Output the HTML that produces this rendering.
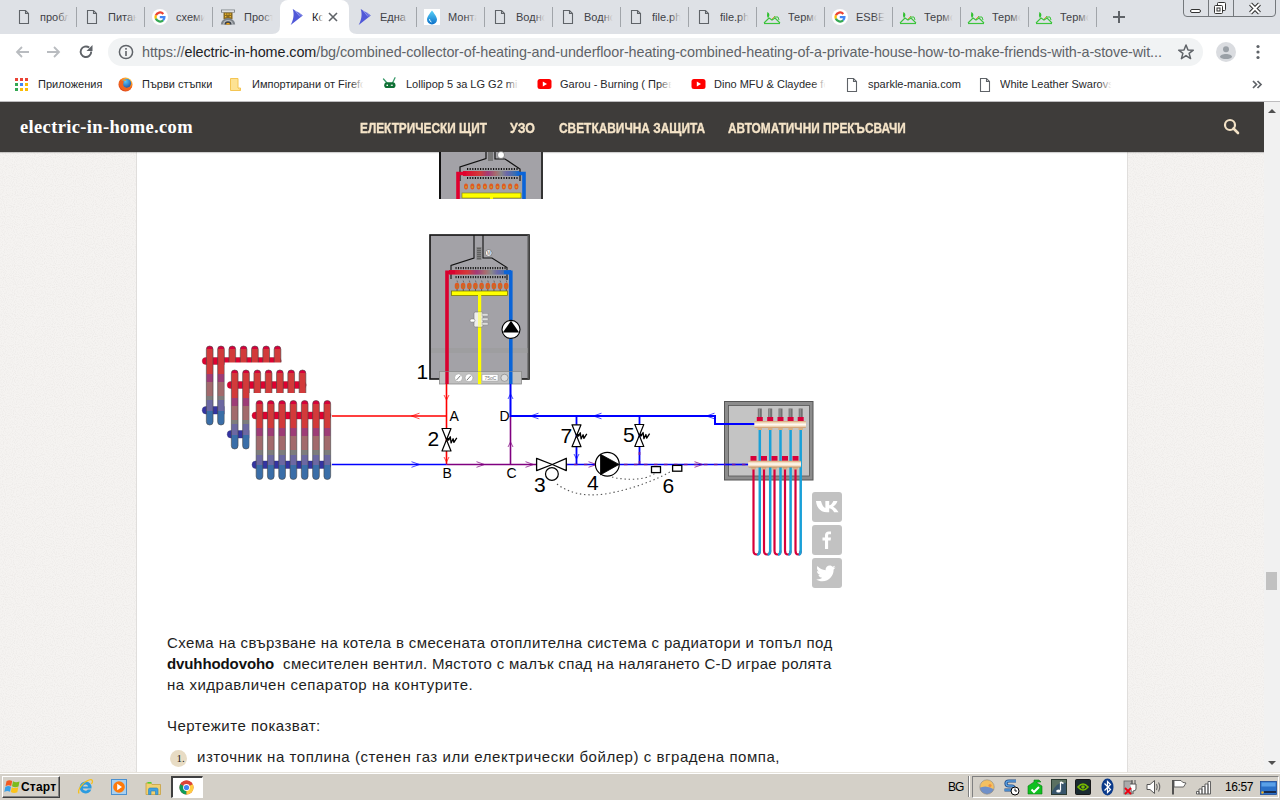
<!DOCTYPE html><html><head><meta charset="utf-8"><style>
*{margin:0;padding:0;box-sizing:border-box}
html,body{width:1280px;height:800px;overflow:hidden;background:#fff;font-family:"Liberation Sans",sans-serif}
.a{position:absolute}
svg{position:absolute;overflow:visible}
.tt{position:absolute;top:10px;font-size:11px;color:#3f4246;white-space:nowrap;overflow:hidden;line-height:14px}
.sep{position:absolute;top:7px;width:1px;height:20px;background:#a1a5aa}
.bmi{position:absolute;top:78px;font-size:11px;color:#26282b;white-space:nowrap;line-height:13px;overflow:hidden}
.nav{position:absolute;top:120px;font-size:14.3px;font-weight:bold;color:#f5e4c8;white-space:nowrap;line-height:17px;transform-origin:0 0;-webkit-text-stroke:0.35px #f5e4c8}
.lbl{position:absolute;font-size:17px;color:#000;line-height:17px}
.lbs{position:absolute;font-size:14px;color:#000;line-height:14px}
.txt{position:absolute;left:167px;font-size:15px;color:#1e1e1e;white-space:nowrap;line-height:20px}
.soc{position:absolute;left:812px;width:30px;height:30px;border-radius:3px;background:#c2c2c2}
.tray{position:absolute;top:778px;width:16px;height:16px}
</style></head><body>
<div class="a" style="left:0;top:0;width:1280px;height:34px;background:#dee1e6"></div>
<div class="a" style="left:280px;top:0;width:69px;height:34px;background:#fff;border-radius:8px 8px 0 0"></div>
<svg style="left:272px;top:26px" width="8" height="8"><path d="M0 8 Q8 8 8 0 L8 8Z" fill="#fff"/></svg>
<svg style="left:349px;top:26px" width="8" height="8"><path d="M8 8 Q0 8 0 0 L0 8Z" fill="#fff"/></svg>
<svg style="left:16px;top:9px" width="16" height="16"><path d="M3.5 1.5h6l3 3v10h-9z M9.5 1.5v3h3" fill="none" stroke="#5f6368" stroke-width="1.1"/></svg>
<div class="tt" style="left:40px;width:30px">пробл<span style="position:absolute;right:0;top:0;width:12px;height:14px;background:linear-gradient(90deg,rgba(222,225,230,0),#dee1e6 90%)"></span></div>
<div class="sep" style="left:76px"></div>
<svg style="left:84px;top:9px" width="16" height="16"><path d="M3.5 1.5h6l3 3v10h-9z M9.5 1.5v3h3" fill="none" stroke="#5f6368" stroke-width="1.1"/></svg>
<div class="tt" style="left:108px;width:30px">Питан<span style="position:absolute;right:0;top:0;width:12px;height:14px;background:linear-gradient(90deg,rgba(222,225,230,0),#dee1e6 90%)"></span></div>
<div class="sep" style="left:144px"></div>
<svg style="left:152px;top:9px" width="16" height="16"><circle cx="8" cy="8" r="8" fill="#fff"/><path d="M11.3 4.9 A4.4 4.4 0 0 0 3.9 6.4" fill="none" stroke="#ea4335" stroke-width="2.3"/><path d="M3.9 6.3 A4.4 4.4 0 0 0 3.9 9.7" fill="none" stroke="#fbbc05" stroke-width="2.3"/><path d="M3.9 9.6 A4.4 4.4 0 0 0 11.2 11.2" fill="none" stroke="#34a853" stroke-width="2.3"/><path d="M7.8 8.1 H12.4 A4.4 4.4 0 0 1 11.1 11.3" fill="none" stroke="#4285f4" stroke-width="2.3"/></svg>
<div class="tt" style="left:176px;width:30px">схеми<span style="position:absolute;right:0;top:0;width:12px;height:14px;background:linear-gradient(90deg,rgba(222,225,230,0),#dee1e6 90%)"></span></div>
<div class="sep" style="left:212px"></div>
<svg style="left:220px;top:9px" width="16" height="16"><rect x="1.5" y="1" width="13" height="2.2" fill="#fff" stroke="#7a7f85" stroke-width="0.9"/><rect x="3.5" y="3.5" width="9" height="6.5" fill="#8a6a20"/><rect x="5" y="4.5" width="1.3" height="1.3" fill="#f8c030"/><rect x="7.3" y="4.5" width="1.3" height="1.3" fill="#f8c030"/><rect x="9.6" y="4.5" width="1.3" height="1.3" fill="#f8c030"/><rect x="5" y="7" width="1.3" height="1.3" fill="#f8c030"/><rect x="9.6" y="7" width="1.3" height="1.3" fill="#f8c030"/><path d="M0.8 15.5 A7.2 6.5 0 0 1 15.2 15.5Z" fill="#7c8288"/><path d="M3 15.5 A5 4.5 0 0 1 13 15.5Z" fill="#b8bcc0"/><path d="M4.5 15.5 A3.5 3.3 0 0 1 11.5 15.5Z" fill="#3a4048"/><path d="M6 15.5 A2 1.8 0 0 1 10 15.5Z" fill="#f5a30a"/></svg>
<div class="tt" style="left:244px;width:30px">Прост<span style="position:absolute;right:0;top:0;width:12px;height:14px;background:linear-gradient(90deg,rgba(222,225,230,0),#dee1e6 90%)"></span></div>
<svg style="left:288px;top:9px" width="16" height="16"><path d="M4.7 0 C7 1.5 9 3 11 3.5 L14.8 6.6 L2.7 16 C5.5 11 6.5 5 4.7 0Z" fill="#5058d8"/><path d="M7.2 1.6 L12 7.5 M9.5 2.6 L13.6 7" stroke="#a8b0f0" stroke-width="0.7"/></svg>
<div class="tt" style="left:312px;width:11px;color:#202124">Ко<span style="position:absolute;right:0;top:0;width:5px;height:14px;background:linear-gradient(90deg,rgba(255,255,255,0),#fff)"></span></div>
<svg style="left:327px;top:11px" width="12" height="12"><path d="M2 2L10 10M10 2L2 10" stroke="#5f6368" stroke-width="1.6"/></svg>
<svg style="left:356px;top:9px" width="16" height="16"><path d="M4.7 0 C7 1.5 9 3 11 3.5 L14.8 6.6 L2.7 16 C5.5 11 6.5 5 4.7 0Z" fill="#5058d8"/><path d="M7.2 1.6 L12 7.5 M9.5 2.6 L13.6 7" stroke="#a8b0f0" stroke-width="0.7"/></svg>
<div class="tt" style="left:380px;width:30px">Една<span style="position:absolute;right:0;top:0;width:12px;height:14px;background:linear-gradient(90deg,rgba(222,225,230,0),#dee1e6 90%)"></span></div>
<div class="sep" style="left:416px"></div>
<svg style="left:424px;top:9px" width="16" height="16"><rect width="16" height="16" fill="#fff"/><defs><linearGradient id="dg" x1="0" y1="0" x2="0" y2="1"><stop offset="0" stop-color="#5ad2f8"/><stop offset="1" stop-color="#0b6fc9"/></linearGradient></defs><path d="M8 1.5 C8 1.5 3 7.5 3 10.5 A5 5 0 0 0 13 10.5 C13 7.5 8 1.5 8 1.5Z" fill="url(#dg)"/><path d="M5.5 10 Q5.5 12.5 7.5 13" stroke="#d8f6ff" stroke-width="1" fill="none"/></svg>
<div class="tt" style="left:448px;width:30px">Монта<span style="position:absolute;right:0;top:0;width:12px;height:14px;background:linear-gradient(90deg,rgba(222,225,230,0),#dee1e6 90%)"></span></div>
<div class="sep" style="left:484px"></div>
<svg style="left:492px;top:9px" width="16" height="16"><path d="M3.5 1.5h6l3 3v10h-9z M9.5 1.5v3h3" fill="none" stroke="#5f6368" stroke-width="1.1"/></svg>
<div class="tt" style="left:516px;width:30px">Водно<span style="position:absolute;right:0;top:0;width:12px;height:14px;background:linear-gradient(90deg,rgba(222,225,230,0),#dee1e6 90%)"></span></div>
<div class="sep" style="left:552px"></div>
<svg style="left:560px;top:9px" width="16" height="16"><path d="M3.5 1.5h6l3 3v10h-9z M9.5 1.5v3h3" fill="none" stroke="#5f6368" stroke-width="1.1"/></svg>
<div class="tt" style="left:584px;width:30px">Водно<span style="position:absolute;right:0;top:0;width:12px;height:14px;background:linear-gradient(90deg,rgba(222,225,230,0),#dee1e6 90%)"></span></div>
<div class="sep" style="left:620px"></div>
<svg style="left:628px;top:9px" width="16" height="16"><path d="M3.5 1.5h6l3 3v10h-9z M9.5 1.5v3h3" fill="none" stroke="#5f6368" stroke-width="1.1"/></svg>
<div class="tt" style="left:652px;width:30px">file.ph<span style="position:absolute;right:0;top:0;width:12px;height:14px;background:linear-gradient(90deg,rgba(222,225,230,0),#dee1e6 90%)"></span></div>
<div class="sep" style="left:688px"></div>
<svg style="left:696px;top:9px" width="16" height="16"><path d="M3.5 1.5h6l3 3v10h-9z M9.5 1.5v3h3" fill="none" stroke="#5f6368" stroke-width="1.1"/></svg>
<div class="tt" style="left:720px;width:30px">file.ph<span style="position:absolute;right:0;top:0;width:12px;height:14px;background:linear-gradient(90deg,rgba(222,225,230,0),#dee1e6 90%)"></span></div>
<div class="sep" style="left:756px"></div>
<svg style="left:763px;top:9px" width="18" height="16"><path d="M1 14 L6 9 L9 11 L12 9 L17 14" fill="none" stroke="#3cc43c" stroke-width="1.1"/><path d="M5 9 C3 6 5 4 4 3 C7 4 7 7 5 9Z" fill="#2fbf2f"/><path d="M9 10 L12 7" stroke="#e08a2a" stroke-width="0.9"/><path d="M11 8 L15 8 L16 11" fill="none" stroke="#3cc43c" stroke-width="1"/><path d="M1 14.5 H17" stroke="#3cc43c" stroke-width="1.2"/></svg>
<div class="tt" style="left:788px;width:30px">Термо<span style="position:absolute;right:0;top:0;width:12px;height:14px;background:linear-gradient(90deg,rgba(222,225,230,0),#dee1e6 90%)"></span></div>
<div class="sep" style="left:824px"></div>
<svg style="left:832px;top:9px" width="16" height="16"><circle cx="8" cy="8" r="8" fill="#fff"/><path d="M11.3 4.9 A4.4 4.4 0 0 0 3.9 6.4" fill="none" stroke="#ea4335" stroke-width="2.3"/><path d="M3.9 6.3 A4.4 4.4 0 0 0 3.9 9.7" fill="none" stroke="#fbbc05" stroke-width="2.3"/><path d="M3.9 9.6 A4.4 4.4 0 0 0 11.2 11.2" fill="none" stroke="#34a853" stroke-width="2.3"/><path d="M7.8 8.1 H12.4 A4.4 4.4 0 0 1 11.1 11.3" fill="none" stroke="#4285f4" stroke-width="2.3"/></svg>
<div class="tt" style="left:856px;width:30px">ESBE<span style="position:absolute;right:0;top:0;width:12px;height:14px;background:linear-gradient(90deg,rgba(222,225,230,0),#dee1e6 90%)"></span></div>
<div class="sep" style="left:892px"></div>
<svg style="left:899px;top:9px" width="18" height="16"><path d="M1 14 L6 9 L9 11 L12 9 L17 14" fill="none" stroke="#3cc43c" stroke-width="1.1"/><path d="M5 9 C3 6 5 4 4 3 C7 4 7 7 5 9Z" fill="#2fbf2f"/><path d="M9 10 L12 7" stroke="#e08a2a" stroke-width="0.9"/><path d="M11 8 L15 8 L16 11" fill="none" stroke="#3cc43c" stroke-width="1"/><path d="M1 14.5 H17" stroke="#3cc43c" stroke-width="1.2"/></svg>
<div class="tt" style="left:924px;width:30px">Термо<span style="position:absolute;right:0;top:0;width:12px;height:14px;background:linear-gradient(90deg,rgba(222,225,230,0),#dee1e6 90%)"></span></div>
<div class="sep" style="left:960px"></div>
<svg style="left:967px;top:9px" width="18" height="16"><path d="M1 14 L6 9 L9 11 L12 9 L17 14" fill="none" stroke="#3cc43c" stroke-width="1.1"/><path d="M5 9 C3 6 5 4 4 3 C7 4 7 7 5 9Z" fill="#2fbf2f"/><path d="M9 10 L12 7" stroke="#e08a2a" stroke-width="0.9"/><path d="M11 8 L15 8 L16 11" fill="none" stroke="#3cc43c" stroke-width="1"/><path d="M1 14.5 H17" stroke="#3cc43c" stroke-width="1.2"/></svg>
<div class="tt" style="left:992px;width:30px">Термо<span style="position:absolute;right:0;top:0;width:12px;height:14px;background:linear-gradient(90deg,rgba(222,225,230,0),#dee1e6 90%)"></span></div>
<div class="sep" style="left:1028px"></div>
<svg style="left:1035px;top:9px" width="18" height="16"><path d="M1 14 L6 9 L9 11 L12 9 L17 14" fill="none" stroke="#3cc43c" stroke-width="1.1"/><path d="M5 9 C3 6 5 4 4 3 C7 4 7 7 5 9Z" fill="#2fbf2f"/><path d="M9 10 L12 7" stroke="#e08a2a" stroke-width="0.9"/><path d="M11 8 L15 8 L16 11" fill="none" stroke="#3cc43c" stroke-width="1"/><path d="M1 14.5 H17" stroke="#3cc43c" stroke-width="1.2"/></svg>
<div class="tt" style="left:1060px;width:30px">Термо<span style="position:absolute;right:0;top:0;width:12px;height:14px;background:linear-gradient(90deg,rgba(222,225,230,0),#dee1e6 90%)"></span></div>
<div class="sep" style="left:1096px"></div>
<svg style="left:1112px;top:10px" width="14" height="14"><path d="M7 1V13M1 7H13" stroke="#5f6368" stroke-width="2"/></svg>
<div class="a" style="left:1183px;top:-3px;width:93px;height:20px;border:1px solid #74787c;border-radius:0 0 4px 4px;background:#dee1e6"></div>
<div class="a" style="left:1208px;top:0;width:1px;height:17px;background:#74787c"></div>
<div class="a" style="left:1233px;top:0;width:1px;height:17px;background:#74787c"></div>
<svg style="left:1189px;top:5px" width="14" height="10"><rect x="1.5" y="4.5" width="10" height="3" rx="1.5" fill="#fff" stroke="#333" stroke-width="1"/></svg>
<svg style="left:1213px;top:1px" width="16" height="14"><rect x="4.5" y="1.5" width="8" height="8" rx="1" fill="#fff" stroke="#333" stroke-width="1"/><rect x="1.5" y="4.5" width="8" height="8" rx="1" fill="#fff" stroke="#333" stroke-width="1"/><rect x="4" y="7" width="3" height="3" fill="none" stroke="#333" stroke-width="1"/></svg>
<svg style="left:1248px;top:2px" width="14" height="13"><path d="M2.5 2 L11.5 11 M11.5 2 L2.5 11" stroke="#333" stroke-width="4"/><path d="M2.5 2 L11.5 11 M11.5 2 L2.5 11" stroke="#fff" stroke-width="2"/></svg>
<div class="a" style="left:0;top:34px;width:1280px;height:34px;background:#fff"></div>
<svg style="left:14px;top:44px" width="16" height="16"><path d="M15 8H3 M8 3L3 8L8 13" fill="none" stroke="#b9bcc0" stroke-width="1.8"/></svg>
<svg style="left:46px;top:44px" width="16" height="16"><path d="M1 8H13 M8 3L13 8L8 13" fill="none" stroke="#b9bcc0" stroke-width="1.8"/></svg>
<svg style="left:78px;top:44px" width="16" height="16"><path d="M13.2 7.5 A5.3 5.3 0 1 1 11.2 3.6" fill="none" stroke="#5f6368" stroke-width="1.9"/><path d="M14.5 1 V7 H8.5Z" fill="#5f6368"/></svg>
<div class="a" style="left:108px;top:38px;width:1095px;height:28px;border-radius:14px;background:#f1f3f4"></div>
<svg style="left:118px;top:44px" width="16" height="16"><circle cx="8" cy="8" r="6.6" fill="none" stroke="#5f6368" stroke-width="1.5"/><rect x="7.2" y="7" width="1.6" height="5" fill="#5f6368"/><rect x="7.2" y="4" width="1.6" height="1.7" fill="#5f6368"/></svg>
<div class="a" style="left:142px;top:43px;font-size:14.4px;letter-spacing:-0.09px;color:#5f6368;white-space:nowrap;line-height:18px">https://<span style="color:#202124">electric-in-home.com</span>/bg/combined-collector-of-heating-and-underfloor-heating-combined-heating-of-a-private-house-how-to-make-friends-with-a-stove-wit...</div>
<svg style="left:1177px;top:43px" width="18" height="18"><path d="M9 2 L11 7 L16.3 7.2 L12.1 10.4 L13.6 15.6 L9 12.6 L4.4 15.6 L5.9 10.4 L1.7 7.2 L7 7Z" fill="none" stroke="#5f6368" stroke-width="1.5" stroke-linejoin="round"/></svg>
<svg style="left:1216px;top:42px" width="20" height="20"><circle cx="10" cy="10" r="10" fill="#dadce0"/><circle cx="10" cy="7.3" r="3" fill="#9aa0a6"/><path d="M4 15 C4 11 16 11 16 15 C15 16.5 13 17 10 17 C7 17 5 16.5 4 15Z" fill="#9aa0a6"/></svg>
<svg style="left:1255px;top:44px" width="6" height="16"><circle cx="3" cy="2.5" r="1.6" fill="#5f6368"/><circle cx="3" cy="8" r="1.6" fill="#5f6368"/><circle cx="3" cy="13.5" r="1.6" fill="#5f6368"/></svg>
<div class="a" style="left:0;top:68px;width:1280px;height:34px;background:#fff;border-bottom:1px solid #bdbcbe"></div>
<svg style="left:15px;top:78px" width="14" height="14"><rect x="0" y="0" width="3" height="3" fill="#ea4335"/><rect x="5" y="0" width="3" height="3" fill="#ea4335"/><rect x="10" y="0" width="3" height="3" fill="#ea4335"/><rect x="0" y="5" width="3" height="3" fill="#34a853"/><rect x="5" y="5" width="3" height="3" fill="#4285f4"/><rect x="10" y="5" width="3" height="3" fill="#fbbc05"/><rect x="0" y="10" width="3" height="3" fill="#34a853"/><rect x="5" y="10" width="3" height="3" fill="#fbbc05"/><rect x="10" y="10" width="3" height="3" fill="#fbbc05"/></svg>
<div class="bmi" style="left:38px">Приложения</div>
<svg style="left:118px;top:77px" width="15" height="15"><defs><radialGradient id="ff" cx="0.7" cy="0.2" r="0.9"><stop offset="0" stop-color="#ffe14a"/><stop offset="0.45" stop-color="#ff8a1e"/><stop offset="1" stop-color="#d83a1a"/></radialGradient><radialGradient id="fg" cx="0.4" cy="0.3" r="0.8"><stop offset="0" stop-color="#5ac8f8"/><stop offset="1" stop-color="#1a4aa0"/></radialGradient></defs><circle cx="7.5" cy="7.5" r="7" fill="url(#ff)"/><circle cx="8.5" cy="6.3" r="4.6" fill="url(#fg)"/><path d="M1 6 C1.5 11 5 14 9 13.5 C12 13 14 11 14.3 8.5 C12.5 11 9 11.5 6.5 10 C4.5 8.5 5 6 6 4.5 C4 4 3 3.5 2.5 2.5 C1.8 3.5 1.2 4.5 1 6Z" fill="#f0641e"/><path d="M5 3.5 L7 2 L8 4Z" fill="#ff9a2a"/></svg>
<div class="bmi" style="left:142px">Първи стъпки</div>
<svg style="left:229px;top:77px" width="13" height="15"><path d="M1.5 1.5 H9 V11 L11.5 13.5 H1.5Z" fill="#fde293" stroke="#f4c553" stroke-width="1"/><path d="M9 11 H11.5 V13.5" fill="#fde293" stroke="#f4c553" stroke-width="1"/></svg>
<div class="bmi" style="left:252px;width:113px">Импортирани от Firefox<span style="position:absolute;right:0;top:0;width:14px;height:15px;background:linear-gradient(90deg,rgba(255,255,255,0),#fff 90%)"></span></div>
<svg style="left:382px;top:77px" width="15" height="14"><path d="M1.5 2 L5 6 M13 0.8 L10.5 6" stroke="#3a9a6a" stroke-width="1.3" stroke-linecap="round"/><rect x="2.2" y="5.3" width="11.3" height="5.8" rx="2.9" fill="#0e7034"/><rect x="4.5" y="7.6" width="1.5" height="1.4" fill="#fff"/><rect x="8.8" y="7.7" width="2" height="1.1" fill="#fff"/></svg>
<div class="bmi" style="left:406px;width:114px">Lollipop 5 за LG G2 mini<span style="position:absolute;right:0;top:0;width:14px;height:15px;background:linear-gradient(90deg,rgba(255,255,255,0),#fff 90%)"></span></div>
<svg style="left:537px;top:78px" width="15" height="12"><rect x="0.5" y="1" width="14" height="10" rx="2.5" fill="#ff0000"/><path d="M5.8 3.5 L10 6 L5.8 8.5Z" fill="#fff"/></svg>
<div class="bmi" style="left:560px;width:113px">Garou - Burning ( Превод<span style="position:absolute;right:0;top:0;width:14px;height:15px;background:linear-gradient(90deg,rgba(255,255,255,0),#fff 90%)"></span></div>
<svg style="left:691px;top:78px" width="15" height="12"><rect x="0.5" y="1" width="14" height="10" rx="2.5" fill="#ff0000"/><path d="M5.8 3.5 L10 6 L5.8 8.5Z" fill="#fff"/></svg>
<div class="bmi" style="left:714px;width:113px">Dino MFU &amp; Claydee feat<span style="position:absolute;right:0;top:0;width:14px;height:15px;background:linear-gradient(90deg,rgba(255,255,255,0),#fff 90%)"></span></div>
<svg style="left:844px;top:77px" width="16" height="16"><path d="M3.5 1.5h6l3 3v10h-9z M9.5 1.5v3h3" fill="none" stroke="#5f6368" stroke-width="1.1"/></svg>
<div class="bmi" style="left:868px">sparkle-mania.com</div>
<svg style="left:977px;top:77px" width="16" height="16"><path d="M3.5 1.5h6l3 3v10h-9z M9.5 1.5v3h3" fill="none" stroke="#5f6368" stroke-width="1.1"/></svg>
<div class="bmi" style="left:1000px;width:113px">White Leather Swarovski<span style="position:absolute;right:0;top:0;width:14px;height:15px;background:linear-gradient(90deg,rgba(255,255,255,0),#fff 90%)"></span></div>
<svg style="left:1252px;top:80px" width="10" height="9"><path d="M1 1 L4.5 4.5 L1 8 M5.5 1 L9 4.5 L5.5 8" fill="none" stroke="#5f6368" stroke-width="1.7"/></svg>
<div class="a" style="left:0;top:102px;width:1264px;height:670px;background:#f5f3f1"></div>
<svg style="left:0;top:152px" width="1264" height="620"><filter id="nz" x="0" y="0" width="100%" height="100%"><feTurbulence type="fractalNoise" baseFrequency="0.9" numOctaves="1" seed="3"/><feColorMatrix type="matrix" values="0 0 0 0 0.55  0 0 0 0 0.52  0 0 0 0 0.5  0 0 0 -2.2 1.25"/></filter><rect width="1264" height="620" filter="url(#nz)" opacity="0.2"/></svg>
<div class="a" style="left:136px;top:152px;width:992px;height:620px;background:#fff;border-left:1px solid #e0dedc;border-right:1px solid #e0dedc"></div>
<div class="a" style="left:0;top:102px;width:1264px;height:50px;background:#3e3c3a;box-shadow:0 1px 1px rgba(0,0,0,0.18)"></div>
<div class="a" style="left:20px;top:116px;font-family:'Liberation Serif',serif;font-weight:bold;font-size:18.5px;letter-spacing:0.35px;color:#fff;line-height:22px;white-space:nowrap">electric-in-home.com</div>
<div class="nav" style="left:360px;transform:scaleX(0.8283)">ЕЛЕКТРИЧЕСКИ ЩИТ</div>
<div class="nav" style="left:510px;transform:scaleX(0.8664)">УЗО</div>
<div class="nav" style="left:559px;transform:scaleX(0.8322)">СВЕТКАВИЧНА ЗАЩИТА</div>
<div class="nav" style="left:728px;transform:scaleX(0.8283)">АВТОМАТИЧНИ ПРЕКЪСВАЧИ</div>
<svg style="left:1223px;top:118px" width="17" height="17"><circle cx="7" cy="7" r="5" fill="none" stroke="#f3e2c6" stroke-width="2.2"/><path d="M10.5 10.5 L15 15" stroke="#f3e2c6" stroke-width="2.6" stroke-linecap="round"/></svg>
<div class="a" style="left:1264px;top:102px;width:16px;height:670px;background:#f1f1f1"></div>
<svg style="left:1264px;top:105px" width="16" height="12"><path d="M4 8 L8 4 L12 8Z" fill="#505050"/></svg>
<div class="a" style="left:1266px;top:572px;width:11px;height:18px;background:#c1c1c1"></div>
<svg style="left:1264px;top:758px" width="16" height="10"><path d="M4 3 L8 7 L12 3Z" fill="#505050"/></svg>
<svg style="left:0;top:0" width="1280" height="800" viewBox="0 0 1280 800">
<defs>
<linearGradient id="radg" x1="0" y1="0" x2="0" y2="1">
<stop offset="0" stop-color="#d8003a"/><stop offset="0.04" stop-color="#d8003a"/>
<stop offset="0.04" stop-color="#d23a3a"/><stop offset="0.35" stop-color="#d23a3a"/>
<stop offset="0.35" stop-color="#9e3c76"/><stop offset="0.455" stop-color="#9e3c76"/>
<stop offset="0.455" stop-color="#a26a6c"/><stop offset="0.63" stop-color="#a26a6c"/>
<stop offset="0.63" stop-color="#7d7d7d"/><stop offset="0.685" stop-color="#7d7d7d"/>
<stop offset="0.685" stop-color="#6c68a2"/><stop offset="0.82" stop-color="#6c68a2"/>
<stop offset="0.82" stop-color="#3a6ea8"/><stop offset="1" stop-color="#3a6ea8"/>
</linearGradient>
<linearGradient id="hxg" x1="0" y1="0" x2="1" y2="0">
<stop offset="0" stop-color="#e0002e"/><stop offset="0.3" stop-color="#d23a3a"/><stop offset="0.45" stop-color="#a03a78"/>
<stop offset="0.58" stop-color="#a86a6e"/><stop offset="0.68" stop-color="#888"/><stop offset="0.78" stop-color="#6c68a8"/><stop offset="0.92" stop-color="#3a6eb0"/><stop offset="1" stop-color="#0a64d8"/>
</linearGradient>
<linearGradient id="barg" x1="0" y1="0" x2="0" y2="1">
<stop offset="0" stop-color="#d4a070"/><stop offset="0.25" stop-color="#f2dcc0"/><stop offset="0.5" stop-color="#fffaf2"/><stop offset="0.75" stop-color="#f2dcc0"/><stop offset="1" stop-color="#c89060"/>
</linearGradient>
</defs>
<g>
<rect x="439" y="152" width="104" height="47" fill="#a3a2a7"/>
<rect x="439" y="152" width="2" height="47" fill="#111"/><rect x="541" y="152" width="2" height="47" fill="#333"/>
<path d="M486 152 V158.5 L460 167 V181 M495 152 V159 H505 L520 169 V181" fill="none" stroke="#111" stroke-width="1.2"/>
<rect x="488" y="152" width="5" height="9" fill="#777"/><circle cx="501" cy="155" r="3.5" fill="#fff" stroke="#555" stroke-width="0.6"/>
<rect x="467.0" y="168" width="1.2" height="2" fill="#111"/><rect x="467.0" y="177" width="1.2" height="2" fill="#111"/>
<rect x="469.6" y="168" width="1.2" height="2" fill="#111"/><rect x="469.6" y="177" width="1.2" height="2" fill="#111"/>
<rect x="472.2" y="168" width="1.2" height="2" fill="#111"/><rect x="472.2" y="177" width="1.2" height="2" fill="#111"/>
<rect x="474.8" y="168" width="1.2" height="2" fill="#111"/><rect x="474.8" y="177" width="1.2" height="2" fill="#111"/>
<rect x="477.4" y="168" width="1.2" height="2" fill="#111"/><rect x="477.4" y="177" width="1.2" height="2" fill="#111"/>
<rect x="480.0" y="168" width="1.2" height="2" fill="#111"/><rect x="480.0" y="177" width="1.2" height="2" fill="#111"/>
<rect x="482.6" y="168" width="1.2" height="2" fill="#111"/><rect x="482.6" y="177" width="1.2" height="2" fill="#111"/>
<rect x="485.2" y="168" width="1.2" height="2" fill="#111"/><rect x="485.2" y="177" width="1.2" height="2" fill="#111"/>
<rect x="487.8" y="168" width="1.2" height="2" fill="#111"/><rect x="487.8" y="177" width="1.2" height="2" fill="#111"/>
<rect x="490.4" y="168" width="1.2" height="2" fill="#111"/><rect x="490.4" y="177" width="1.2" height="2" fill="#111"/>
<rect x="493.0" y="168" width="1.2" height="2" fill="#111"/><rect x="493.0" y="177" width="1.2" height="2" fill="#111"/>
<rect x="495.6" y="168" width="1.2" height="2" fill="#111"/><rect x="495.6" y="177" width="1.2" height="2" fill="#111"/>
<rect x="498.2" y="168" width="1.2" height="2" fill="#111"/><rect x="498.2" y="177" width="1.2" height="2" fill="#111"/>
<rect x="500.8" y="168" width="1.2" height="2" fill="#111"/><rect x="500.8" y="177" width="1.2" height="2" fill="#111"/>
<rect x="503.4" y="168" width="1.2" height="2" fill="#111"/><rect x="503.4" y="177" width="1.2" height="2" fill="#111"/>
<rect x="506.0" y="168" width="1.2" height="2" fill="#111"/><rect x="506.0" y="177" width="1.2" height="2" fill="#111"/>
<rect x="508.6" y="168" width="1.2" height="2" fill="#111"/><rect x="508.6" y="177" width="1.2" height="2" fill="#111"/>
<rect x="511.2" y="168" width="1.2" height="2" fill="#111"/><rect x="511.2" y="177" width="1.2" height="2" fill="#111"/>
<rect x="513.8" y="168" width="1.2" height="2" fill="#111"/><rect x="513.8" y="177" width="1.2" height="2" fill="#111"/>
<rect x="516.4" y="168" width="1.2" height="2" fill="#111"/><rect x="516.4" y="177" width="1.2" height="2" fill="#111"/>
<rect x="463" y="171" width="56" height="5" fill="url(#hxg)"/>
<path d="M458 199 V173.5 H466" fill="none" stroke="#e0002e" stroke-width="3.6"/>
<path d="M519 173.5 H524 V199" fill="none" stroke="#0a64d8" stroke-width="3.6"/>
<ellipse cx="466.0" cy="186.5" rx="2" ry="3" fill="#e05a20"/><circle cx="466.0" cy="187" r="1" fill="#c8a030"/>
<ellipse cx="472.3" cy="186.5" rx="2" ry="3" fill="#e05a20"/><circle cx="472.3" cy="187" r="1" fill="#c8a030"/>
<ellipse cx="478.6" cy="186.5" rx="2" ry="3" fill="#e05a20"/><circle cx="478.6" cy="187" r="1" fill="#c8a030"/>
<ellipse cx="484.9" cy="186.5" rx="2" ry="3" fill="#e05a20"/><circle cx="484.9" cy="187" r="1" fill="#c8a030"/>
<ellipse cx="491.2" cy="186.5" rx="2" ry="3" fill="#e05a20"/><circle cx="491.2" cy="187" r="1" fill="#c8a030"/>
<ellipse cx="497.5" cy="186.5" rx="2" ry="3" fill="#e05a20"/><circle cx="497.5" cy="187" r="1" fill="#c8a030"/>
<ellipse cx="503.8" cy="186.5" rx="2" ry="3" fill="#e05a20"/><circle cx="503.8" cy="187" r="1" fill="#c8a030"/>
<ellipse cx="510.1" cy="186.5" rx="2" ry="3" fill="#e05a20"/><circle cx="510.1" cy="187" r="1" fill="#c8a030"/>
<ellipse cx="516.4" cy="186.5" rx="2" ry="3" fill="#e05a20"/><circle cx="516.4" cy="187" r="1" fill="#c8a030"/>
<rect x="462" y="193" width="59" height="5" fill="#ffff00" stroke="#808000" stroke-width="0.6"/><rect x="490" y="197" width="3" height="2" fill="#ff0"/>
</g>
<rect x="430" y="235" width="99" height="144" fill="#a3a2a7" stroke="#111" stroke-width="1.6"/>
<rect x="527.5" y="235" width="1.6" height="144" fill="#555"/>
<rect x="431" y="348" width="97" height="5" fill="#999" opacity="0.5"/>
<path d="M474 235 V258 L451 265.5 V279 M483 235 V258 H492 L507 267.5 V280" fill="none" stroke="#111" stroke-width="1.1"/>
<rect x="476.5" y="247" width="5" height="13" fill="#808080"/>
<rect x="477" y="248" width="4" height="0.8" fill="#5a5a5a"/>
<rect x="477" y="250" width="4" height="0.8" fill="#5a5a5a"/>
<rect x="477" y="252" width="4" height="0.8" fill="#5a5a5a"/>
<rect x="477" y="254" width="4" height="0.8" fill="#5a5a5a"/>
<rect x="477" y="256" width="4" height="0.8" fill="#5a5a5a"/>
<rect x="477" y="258" width="4" height="0.8" fill="#5a5a5a"/>
<circle cx="488.7" cy="253" r="3.3" fill="#fff" stroke="#555" stroke-width="0.6"/><text x="486.9" y="255" font-size="4.5" fill="#555" font-family="Liberation Sans">M</text>
<rect x="455.50" y="267" width="1.1" height="2.2" fill="#111"/><rect x="455.50" y="276" width="1.1" height="2.2" fill="#111"/>
<rect x="457.95" y="267" width="1.1" height="2.2" fill="#111"/><rect x="457.95" y="276" width="1.1" height="2.2" fill="#111"/>
<rect x="460.40" y="267" width="1.1" height="2.2" fill="#111"/><rect x="460.40" y="276" width="1.1" height="2.2" fill="#111"/>
<rect x="462.85" y="267" width="1.1" height="2.2" fill="#111"/><rect x="462.85" y="276" width="1.1" height="2.2" fill="#111"/>
<rect x="465.30" y="267" width="1.1" height="2.2" fill="#111"/><rect x="465.30" y="276" width="1.1" height="2.2" fill="#111"/>
<rect x="467.75" y="267" width="1.1" height="2.2" fill="#111"/><rect x="467.75" y="276" width="1.1" height="2.2" fill="#111"/>
<rect x="470.20" y="267" width="1.1" height="2.2" fill="#111"/><rect x="470.20" y="276" width="1.1" height="2.2" fill="#111"/>
<rect x="472.65" y="267" width="1.1" height="2.2" fill="#111"/><rect x="472.65" y="276" width="1.1" height="2.2" fill="#111"/>
<rect x="475.10" y="267" width="1.1" height="2.2" fill="#111"/><rect x="475.10" y="276" width="1.1" height="2.2" fill="#111"/>
<rect x="477.55" y="267" width="1.1" height="2.2" fill="#111"/><rect x="477.55" y="276" width="1.1" height="2.2" fill="#111"/>
<rect x="480.00" y="267" width="1.1" height="2.2" fill="#111"/><rect x="480.00" y="276" width="1.1" height="2.2" fill="#111"/>
<rect x="482.45" y="267" width="1.1" height="2.2" fill="#111"/><rect x="482.45" y="276" width="1.1" height="2.2" fill="#111"/>
<rect x="484.90" y="267" width="1.1" height="2.2" fill="#111"/><rect x="484.90" y="276" width="1.1" height="2.2" fill="#111"/>
<rect x="487.35" y="267" width="1.1" height="2.2" fill="#111"/><rect x="487.35" y="276" width="1.1" height="2.2" fill="#111"/>
<rect x="489.80" y="267" width="1.1" height="2.2" fill="#111"/><rect x="489.80" y="276" width="1.1" height="2.2" fill="#111"/>
<rect x="492.25" y="267" width="1.1" height="2.2" fill="#111"/><rect x="492.25" y="276" width="1.1" height="2.2" fill="#111"/>
<rect x="494.70" y="267" width="1.1" height="2.2" fill="#111"/><rect x="494.70" y="276" width="1.1" height="2.2" fill="#111"/>
<rect x="497.15" y="267" width="1.1" height="2.2" fill="#111"/><rect x="497.15" y="276" width="1.1" height="2.2" fill="#111"/>
<rect x="499.60" y="267" width="1.1" height="2.2" fill="#111"/><rect x="499.60" y="276" width="1.1" height="2.2" fill="#111"/>
<rect x="502.05" y="267" width="1.1" height="2.2" fill="#111"/><rect x="502.05" y="276" width="1.1" height="2.2" fill="#111"/>
<rect x="504.50" y="267" width="1.1" height="2.2" fill="#111"/><rect x="504.50" y="276" width="1.1" height="2.2" fill="#111"/>
<rect x="449" y="270" width="62" height="4.6" fill="url(#hxg)"/>
<path d="M447 371 V272.2 H455" fill="none" stroke="#d9002f" stroke-width="3.6"/>
<path d="M504 272.2 H510.8 V371" fill="none" stroke="#0a64d8" stroke-width="3.6"/>
<path d="M457.0 280.5 L457.6 282.5" stroke="#444" stroke-width="0.6"/><ellipse cx="457.0" cy="286" rx="2.3" ry="3.2" fill="#de5a22"/><ellipse cx="457.3" cy="286.6" rx="1" ry="1.6" fill="#b07830"/><rect x="456.6" y="289" width="0.9" height="2.3" fill="#555"/>
<path d="M463.1 280.5 L463.8 282.5" stroke="#444" stroke-width="0.6"/><ellipse cx="463.1" cy="286" rx="2.3" ry="3.2" fill="#de5a22"/><ellipse cx="463.4" cy="286.6" rx="1" ry="1.6" fill="#b07830"/><rect x="462.8" y="289" width="0.9" height="2.3" fill="#555"/>
<path d="M469.3 280.5 L469.9 282.5" stroke="#444" stroke-width="0.6"/><ellipse cx="469.3" cy="286" rx="2.3" ry="3.2" fill="#de5a22"/><ellipse cx="469.6" cy="286.6" rx="1" ry="1.6" fill="#b07830"/><rect x="468.9" y="289" width="0.9" height="2.3" fill="#555"/>
<path d="M475.4 280.5 L476.1 282.5" stroke="#444" stroke-width="0.6"/><ellipse cx="475.4" cy="286" rx="2.3" ry="3.2" fill="#de5a22"/><ellipse cx="475.8" cy="286.6" rx="1" ry="1.6" fill="#b07830"/><rect x="475.1" y="289" width="0.9" height="2.3" fill="#555"/>
<path d="M481.6 280.5 L482.2 282.5" stroke="#444" stroke-width="0.6"/><ellipse cx="481.6" cy="286" rx="2.3" ry="3.2" fill="#de5a22"/><ellipse cx="481.9" cy="286.6" rx="1" ry="1.6" fill="#b07830"/><rect x="481.2" y="289" width="0.9" height="2.3" fill="#555"/>
<path d="M487.8 280.5 L488.4 282.5" stroke="#444" stroke-width="0.6"/><ellipse cx="487.8" cy="286" rx="2.3" ry="3.2" fill="#de5a22"/><ellipse cx="488.1" cy="286.6" rx="1" ry="1.6" fill="#b07830"/><rect x="487.4" y="289" width="0.9" height="2.3" fill="#555"/>
<path d="M493.9 280.5 L494.5 282.5" stroke="#444" stroke-width="0.6"/><ellipse cx="493.9" cy="286" rx="2.3" ry="3.2" fill="#de5a22"/><ellipse cx="494.2" cy="286.6" rx="1" ry="1.6" fill="#b07830"/><rect x="493.5" y="289" width="0.9" height="2.3" fill="#555"/>
<path d="M500.1 280.5 L500.7 282.5" stroke="#444" stroke-width="0.6"/><ellipse cx="500.1" cy="286" rx="2.3" ry="3.2" fill="#de5a22"/><ellipse cx="500.4" cy="286.6" rx="1" ry="1.6" fill="#b07830"/><rect x="499.7" y="289" width="0.9" height="2.3" fill="#555"/>
<path d="M506.2 280.5 L506.8 282.5" stroke="#444" stroke-width="0.6"/><ellipse cx="506.2" cy="286" rx="2.3" ry="3.2" fill="#de5a22"/><ellipse cx="506.5" cy="286.6" rx="1" ry="1.6" fill="#b07830"/><rect x="505.8" y="289" width="0.9" height="2.3" fill="#555"/>
<rect x="451.5" y="291" width="56" height="4.6" fill="#ffff00" stroke="#707000" stroke-width="0.7"/>
<rect x="478" y="295" width="3.2" height="76" fill="#ffff00"/>
<rect x="474" y="312" width="9" height="15" rx="1.5" fill="#eee" stroke="#777" stroke-width="0.6"/><rect x="470" y="319" width="5" height="3" rx="1.5" fill="#fff" stroke="#777" stroke-width="0.5"/>
<rect x="482" y="313.5" width="6" height="2.5" fill="#ddd" stroke="#888" stroke-width="0.4"/><rect x="482" y="318" width="6" height="2.5" fill="#ddd" stroke="#888" stroke-width="0.4"/><rect x="482" y="322.5" width="6" height="2.5" fill="#ddd" stroke="#888" stroke-width="0.4"/>
<rect x="478" y="312" width="3.2" height="15" fill="#ffff66" opacity="0.7"/>
<circle cx="511" cy="329.4" r="9" fill="#fff" stroke="#000" stroke-width="1.1"/><path d="M511 320.8 L519.2 332.5 L502.8 332.5Z" fill="#000"/>
<rect x="439.5" y="371.5" width="82" height="12.5" fill="#c0c0c0" stroke="#8a8a8a" stroke-width="0.8"/>
<path d="M447 371.5 V384" stroke="#d9002f" stroke-width="3.4"/><path d="M479.6 371.5 V384" stroke="#ffff00" stroke-width="3.2"/><path d="M510.8 371.5 V384" stroke="#0a64d8" stroke-width="3.4"/>
<circle cx="458.5" cy="377.8" r="4" fill="#fff" stroke="#999" stroke-width="0.6"/><path d="M456.5 380 L460.5 375.6" stroke="#555" stroke-width="0.8"/>
<circle cx="469" cy="377.8" r="4" fill="#fff" stroke="#999" stroke-width="0.6"/><path d="M467 380 L471 375.6" stroke="#555" stroke-width="0.8"/>
<rect x="482" y="374.5" width="16" height="6.5" fill="#fff" stroke="#999" stroke-width="0.5"/><text x="484.5" y="380" font-size="5" fill="#777" font-family="Liberation Sans">75oC</text>
<circle cx="504.5" cy="377.8" r="3.6" fill="#ddd" stroke="#777" stroke-width="0.6"/>
<text x="416.5" y="378.5" font-size="21" font-family="Liberation Sans" fill="#000">1</text>
<rect x="202.2" y="357.5" width="79" height="7" rx="3.5" fill="#e00030" stroke="#8a2030" stroke-width="0.4"/><rect x="202.2" y="406.5" width="79" height="7.5" rx="3.7" fill="#3434a2" stroke="#303070" stroke-width="0.4"/><rect x="206.35" y="346" width="6.7" height="79" rx="3.3" fill="url(#radg)" stroke="#444" stroke-width="0.6"/><rect x="217.65" y="346" width="6.7" height="79" rx="3.3" fill="url(#radg)" stroke="#444" stroke-width="0.6"/><rect x="228.95" y="346" width="6.7" height="79" rx="3.3" fill="url(#radg)" stroke="#444" stroke-width="0.6"/><rect x="240.25" y="346" width="6.7" height="79" rx="3.3" fill="url(#radg)" stroke="#444" stroke-width="0.6"/><rect x="251.55" y="346" width="6.7" height="79" rx="3.3" fill="url(#radg)" stroke="#444" stroke-width="0.6"/><rect x="262.85" y="346" width="6.7" height="79" rx="3.3" fill="url(#radg)" stroke="#444" stroke-width="0.6"/><rect x="274.15" y="346" width="6.7" height="79" rx="3.3" fill="url(#radg)" stroke="#444" stroke-width="0.6"/>
<rect x="224.7" y="362.5" width="90" height="92" fill="#fff"/><rect x="227.2" y="381.5" width="79" height="7" rx="3.5" fill="#e00030" stroke="#8a2030" stroke-width="0.4"/><rect x="227.2" y="430.5" width="79" height="7.5" rx="3.7" fill="#3434a2" stroke="#303070" stroke-width="0.4"/><rect x="231.35" y="370" width="6.7" height="79" rx="3.3" fill="url(#radg)" stroke="#444" stroke-width="0.6"/><rect x="242.65" y="370" width="6.7" height="79" rx="3.3" fill="url(#radg)" stroke="#444" stroke-width="0.6"/><rect x="253.95" y="370" width="6.7" height="79" rx="3.3" fill="url(#radg)" stroke="#444" stroke-width="0.6"/><rect x="265.25" y="370" width="6.7" height="79" rx="3.3" fill="url(#radg)" stroke="#444" stroke-width="0.6"/><rect x="276.55" y="370" width="6.7" height="79" rx="3.3" fill="url(#radg)" stroke="#444" stroke-width="0.6"/><rect x="287.85" y="370" width="6.7" height="79" rx="3.3" fill="url(#radg)" stroke="#444" stroke-width="0.6"/><rect x="299.15" y="370" width="6.7" height="79" rx="3.3" fill="url(#radg)" stroke="#444" stroke-width="0.6"/>
<rect x="249.5" y="393.0" width="90" height="92" fill="#fff"/><rect x="252.0" y="412.0" width="79" height="7" rx="3.5" fill="#e00030" stroke="#8a2030" stroke-width="0.4"/><rect x="252.0" y="461.0" width="79" height="7.5" rx="3.7" fill="#3434a2" stroke="#303070" stroke-width="0.4"/><rect x="256.15" y="400.5" width="6.7" height="79" rx="3.3" fill="url(#radg)" stroke="#444" stroke-width="0.6"/><rect x="267.45" y="400.5" width="6.7" height="79" rx="3.3" fill="url(#radg)" stroke="#444" stroke-width="0.6"/><rect x="278.75" y="400.5" width="6.7" height="79" rx="3.3" fill="url(#radg)" stroke="#444" stroke-width="0.6"/><rect x="290.05" y="400.5" width="6.7" height="79" rx="3.3" fill="url(#radg)" stroke="#444" stroke-width="0.6"/><rect x="301.35" y="400.5" width="6.7" height="79" rx="3.3" fill="url(#radg)" stroke="#444" stroke-width="0.6"/><rect x="312.65" y="400.5" width="6.7" height="79" rx="3.3" fill="url(#radg)" stroke="#444" stroke-width="0.6"/><rect x="323.95" y="400.5" width="6.7" height="79" rx="3.3" fill="url(#radg)" stroke="#444" stroke-width="0.6"/>
<path d="M332 416 H446.5 M446.5 384 V464.5" stroke="#ff0000" stroke-width="1.6" fill="none"/>
<path d="M332 464.5 H446.5" stroke="#0000ff" stroke-width="1.6" fill="none"/>
<path d="M446.5 464.5 H537 M510.5 464.5 V416" stroke="#800080" stroke-width="1.6" fill="none"/>
<path d="M510.5 384 V416 H715 V424 H755" stroke="#0000ff" stroke-width="2" fill="none"/>
<path d="M576.5 416 V464.5 M639.5 416 V464.5" stroke="#0000ff" stroke-width="1.8" fill="none"/>
<path d="M639.5 452 V464.5" stroke="#8a1a8a" stroke-width="1.7" fill="none" stroke-dasharray="3 6" opacity="0.85"/>
<path d="M566 464.5 H749" stroke="#0000ff" stroke-width="1.7" fill="none"/>
<path d="M566 464.5 H749" stroke="#8a1a8a" stroke-width="1.7" fill="none" stroke-dasharray="3.5 6.5" stroke-dashoffset="2" opacity="0.85"/>
<path d="M444.0 395 L446.5 400 L449.0 395" stroke="#ff0000" stroke-width="0.9" fill="none" opacity="0.8"/>
<path d="M444.0 457 L446.5 462 L449.0 457" stroke="#ff0000" stroke-width="0.9" fill="none" opacity="0.8"/>
<path d="M419.5 413.2 L411.5 416 L419.5 418.8" stroke="#ff0000" stroke-width="0.9" fill="none" opacity="0.8"/>
<path d="M411.5 461.7 L419.5 464.5 L411.5 467.3" stroke="#0000ff" stroke-width="0.9" fill="none" opacity="0.8"/>
<path d="M476.5 461.7 L484.5 464.5 L476.5 467.3" stroke="#800080" stroke-width="0.9" fill="none" opacity="0.8"/>
<path d="M525.5 461.7 L533.5 464.5 L525.5 467.3" stroke="#800080" stroke-width="0.9" fill="none" opacity="0.8"/>
<path d="M508.0 447 L510.5 442 L513.0 447" stroke="#800080" stroke-width="0.9" fill="none" opacity="0.8"/>
<path d="M508.0 399 L510.5 394 L513.0 399" stroke="#0000ff" stroke-width="0.9" fill="none" opacity="0.8"/>
<path d="M538.5 413.2 L530.5 416 L538.5 418.8" stroke="#0000ff" stroke-width="0.9" fill="none" opacity="0.8"/>
<path d="M601.5 413.2 L593.5 416 L601.5 418.8" stroke="#0000ff" stroke-width="0.9" fill="none" opacity="0.8"/>
<path d="M714.5 413.2 L706.5 416 L714.5 418.8" stroke="#0000ff" stroke-width="0.9" fill="none" opacity="0.8"/>
<path d="M574.0 454 L576.5 459 L579.0 454" stroke="#0000ff" stroke-width="0.9" fill="none" opacity="0.8"/>
<path d="M588.5 461.7 L596.5 464.5 L588.5 467.3" stroke="#800080" stroke-width="0.9" fill="none" opacity="0.8"/>
<path d="M694.5 461.7 L702.5 464.5 L694.5 467.3" stroke="#800080" stroke-width="0.9" fill="none" opacity="0.8"/>
<text x="449.5" y="421.3" font-size="14" font-family="Liberation Sans" fill="#000">A</text>
<text x="442.5" y="477.5" font-size="14" font-family="Liberation Sans" fill="#000">B</text>
<text x="506.5" y="477.5" font-size="14" font-family="Liberation Sans" fill="#000">C</text>
<text x="499.5" y="421.3" font-size="14" font-family="Liberation Sans" fill="#000">D</text>
<text x="427.5" y="445.6" font-size="21" font-family="Liberation Sans" fill="#000">2</text>
<text x="534" y="491.5" font-size="21" font-family="Liberation Sans" fill="#000">3</text>
<text x="587" y="489.5" font-size="21" font-family="Liberation Sans" fill="#000">4</text>
<text x="623" y="442" font-size="21" font-family="Liberation Sans" fill="#000">5</text>
<text x="662.5" y="493" font-size="21" font-family="Liberation Sans" fill="#000">6</text>
<text x="560.5" y="443" font-size="21" font-family="Liberation Sans" fill="#000">7</text>
<path d="M442.0 428.5 H451.0 L442.0 451 H451.0Z" fill="#fff" stroke="#000" stroke-width="1.2" stroke-linejoin="round"/><circle cx="448.1" cy="439.15" r="1.5" fill="#000"/><path d="M448.5 439.75 L450.3 436.75 L451.1 442.95 L453.1 438.75 L453.9 442.35 L456.8 437.95" fill="none" stroke="#000" stroke-width="1.3" stroke-linejoin="round"/>
<path d="M572.0 424.8 H581.0 L572.0 446.7 H581.0Z" fill="#fff" stroke="#000" stroke-width="1.2" stroke-linejoin="round"/><circle cx="578.1" cy="435.15" r="1.5" fill="#000"/><path d="M578.5 435.75 L580.3 432.75 L581.1 438.95 L583.1 434.75 L583.9 438.35 L586.8 433.95" fill="none" stroke="#000" stroke-width="1.3" stroke-linejoin="round"/>
<path d="M634.8 424.5 H643.8 L634.8 446.5 H643.8Z" fill="#fff" stroke="#000" stroke-width="1.2" stroke-linejoin="round"/><circle cx="640.9" cy="434.9" r="1.5" fill="#000"/><path d="M641.3 435.5 L643.0999999999999 432.5 L643.9 438.7 L645.9 434.5 L646.6999999999999 438.1 L649.5999999999999 433.7" fill="none" stroke="#000" stroke-width="1.3" stroke-linejoin="round"/>
<path d="M536.6 458.3 V470.6 L552.3 464.5 Z M566.3 458.3 V470.6 L552.3 464.5Z" fill="#fff" stroke="#000" stroke-width="1.3" stroke-linejoin="round"/>
<circle cx="551.9" cy="474" r="6.4" fill="#fff" stroke="#000" stroke-width="1.2"/>
<circle cx="607.3" cy="464.2" r="11.9" fill="#fff" stroke="#000" stroke-width="1.2"/><path d="M600.5 454.3 L619 464.4 L600.5 474.8Z" fill="#000" stroke="#000" stroke-width="0.8"/>
<rect x="651.5" y="466.6" width="9" height="6" fill="#fff" stroke="#000" stroke-width="1.3"/><rect x="672.6" y="465.4" width="9.2" height="5.8" fill="#fff" stroke="#000" stroke-width="1.3"/>
<path d="M612 477 Q628 481 644 478 Q652 476 655 473" fill="none" stroke="#555" stroke-width="1.1" stroke-dasharray="1.4 2.8"/>
<path d="M557 484 Q575 498 605 494 Q640 488 670 472" fill="none" stroke="#555" stroke-width="1.1" stroke-dasharray="1.4 2.8"/>
<rect x="724.5" y="401.5" width="88.5" height="78.5" fill="#8c8c8c" stroke="#555" stroke-width="1"/>
<rect x="728.5" y="405.5" width="81" height="70.5" fill="#c4c4c4" stroke="#555" stroke-width="0.8"/>
<path d="M724 424 H755" stroke="#0000ff" stroke-width="2" fill="none"/>
<path d="M724 464.5 H749" stroke="#0000ff" stroke-width="1.7" fill="none"/><path d="M724 464.5 H749" stroke="#8a1a8a" stroke-width="1.7" fill="none" stroke-dasharray="3.5 6.5" stroke-dashoffset="2" opacity="0.85"/>
<path d="M753.5 466 V550.5 Q753.5 554.5 756.65 554.5 Q759.8 554.5 759.8 550.5" fill="none" stroke="#d8003a" stroke-width="2.2"/>
<path d="M759.8 428 V550.5 Q759.8 554.5 757.15 554.5" fill="none" stroke="#19a0d8" stroke-width="2.5"/>
<path d="M764 466 V550.5 Q764 554.5 767.1 554.5 Q770.2 554.5 770.2 550.5" fill="none" stroke="#d8003a" stroke-width="2.2"/>
<path d="M770.2 428 V550.5 Q770.2 554.5 767.6 554.5" fill="none" stroke="#19a0d8" stroke-width="2.5"/>
<path d="M774.5 466 V550.5 Q774.5 554.5 777.5 554.5 Q780.5 554.5 780.5 550.5" fill="none" stroke="#d8003a" stroke-width="2.2"/>
<path d="M780.5 428 V550.5 Q780.5 554.5 778.0 554.5" fill="none" stroke="#19a0d8" stroke-width="2.5"/>
<path d="M785 466 V550.5 Q785 554.5 787.8 554.5 Q790.6 554.5 790.6 550.5" fill="none" stroke="#d8003a" stroke-width="2.2"/>
<path d="M790.6 428 V550.5 Q790.6 554.5 788.3 554.5" fill="none" stroke="#19a0d8" stroke-width="2.5"/>
<path d="M795.5 466 V550.5 Q795.5 554.5 798.1 554.5 Q800.7 554.5 800.7 550.5" fill="none" stroke="#d8003a" stroke-width="2.2"/>
<path d="M800.7 428 V550.5 Q800.7 554.5 798.6 554.5" fill="none" stroke="#19a0d8" stroke-width="2.5"/>
<rect x="757.8" y="408.5" width="4" height="9" fill="#707070"/><rect x="758.8" y="408.5" width="1" height="9" fill="#999"/>
<rect x="756.8" y="417" width="6" height="4.3" fill="#d8003a"/>
<rect x="757.5999999999999" y="427.5" width="4.4" height="2.5" fill="#d8b080"/>
<rect x="768.2" y="408.5" width="4" height="9" fill="#707070"/><rect x="769.2" y="408.5" width="1" height="9" fill="#999"/>
<rect x="767.2" y="417" width="6" height="4.3" fill="#d8003a"/>
<rect x="768.0" y="427.5" width="4.4" height="2.5" fill="#d8b080"/>
<rect x="778.5" y="408.5" width="4" height="9" fill="#707070"/><rect x="779.5" y="408.5" width="1" height="9" fill="#999"/>
<rect x="777.5" y="417" width="6" height="4.3" fill="#d8003a"/>
<rect x="778.3" y="427.5" width="4.4" height="2.5" fill="#d8b080"/>
<rect x="788.6" y="408.5" width="4" height="9" fill="#707070"/><rect x="789.6" y="408.5" width="1" height="9" fill="#999"/>
<rect x="787.6" y="417" width="6" height="4.3" fill="#d8003a"/>
<rect x="788.4" y="427.5" width="4.4" height="2.5" fill="#d8b080"/>
<rect x="798.7" y="408.5" width="4" height="9" fill="#707070"/><rect x="799.7" y="408.5" width="1" height="9" fill="#999"/>
<rect x="797.7" y="417" width="6" height="4.3" fill="#d8003a"/>
<rect x="798.5" y="427.5" width="4.4" height="2.5" fill="#d8b080"/>
<rect x="754.3" y="421" width="51.7" height="7" rx="1" fill="url(#barg)"/>
<rect x="750.5" y="456" width="6" height="4.8" fill="#d8003a"/>
<rect x="751.3" y="467" width="4.4" height="2.5" fill="#d8b080"/>
<rect x="761" y="456" width="6" height="4.8" fill="#d8003a"/>
<rect x="761.8" y="467" width="4.4" height="2.5" fill="#d8b080"/>
<rect x="771.5" y="456" width="6" height="4.8" fill="#d8003a"/>
<rect x="772.3" y="467" width="4.4" height="2.5" fill="#d8b080"/>
<rect x="782" y="456" width="6" height="4.8" fill="#d8003a"/>
<rect x="782.8" y="467" width="4.4" height="2.5" fill="#d8b080"/>
<rect x="792.5" y="456" width="6" height="4.8" fill="#d8003a"/>
<rect x="793.3" y="467" width="4.4" height="2.5" fill="#d8b080"/>
<rect x="748.1" y="460.8" width="52.9" height="6.6" rx="1" fill="url(#barg)"/>
</svg>
<div class="txt" style="top:633px;letter-spacing:0.383px">Схема на свързване на котела в смесената отоплителна система с радиатори и топъл под</div>
<div class="txt" style="top:654px;letter-spacing:0.319px"><b style="color:#111;letter-spacing:-0.1px">dvuhhodovoho</b>&nbsp; смесителен вентил. Мястото с малък спад на налягането C-D играе ролята</div>
<div class="txt" style="top:675px;letter-spacing:0.529px">на хидравличен сепаратор на контурите.</div>
<div class="txt" style="top:716px;letter-spacing:0.507px">Чертежите показват:</div>
<div class="a" style="left:170px;top:750px;width:17px;height:17px;border-radius:50%;background:#e8dcc4"></div>
<div class="a" style="left:176.5px;top:751px;font-family:'Liberation Serif',serif;font-size:11px;color:#222;line-height:14px">1.</div>
<div class="txt" style="left:197px;top:747px;letter-spacing:0.545px">източник на топлина (стенен газ или електрически бойлер) с вградена помпа,</div>
<div class="soc" style="top:492px"></div><div class="soc" style="top:525px"></div><div class="soc" style="top:558px"></div>
<svg style="left:812px;top:492px" width="30" height="30"><path transform="translate(4 9) scale(1.1 1.08) translate(-4 -10)" d="M4 10 H8.5 C9.5 14 11 16 12.5 16.5 V10 H16 V14 C17.5 14 19 12 19.8 10 H23.5 C22.8 12.5 21 14.5 19.5 15.3 C21 16 22.8 17.6 24.5 20.5 H20.5 C19.5 18.5 18 17 16 16.8 V20.5 H14 C8 20.5 4.5 16 4 10Z" fill="#fff"/></svg>
<svg style="left:812px;top:525px" width="30" height="30"><path d="M13 24 V15.5 H10.5 V12.5 H13 V10.3 C13 7.8 14.5 6.5 16.8 6.5 C17.8 6.5 18.7 6.6 19 6.6 V9.3 H17.4 C16.3 9.3 16.1 9.8 16.1 10.6 V12.5 H19 L18.6 15.5 H16.1 V24Z" fill="#fff"/></svg>
<svg style="left:812px;top:558px" width="30" height="30"><path d="M23.5 9.3 C22.8 9.6 22.1 9.8 21.3 9.9 C22.1 9.4 22.7 8.7 23 7.8 C22.2 8.2 21.4 8.6 20.5 8.7 C19.8 7.9 18.7 7.4 17.6 7.4 C15.4 7.4 13.6 9.2 13.6 11.4 C13.6 11.7 13.6 12 13.7 12.3 C10.4 12.1 7.5 10.6 5.5 8.1 C5.2 8.7 5 9.4 5 10.1 C5 11.5 5.7 12.7 6.8 13.4 C6.1 13.4 5.5 13.2 5 12.9 C5 14.9 6.4 16.5 8.2 16.9 C7.5 17.1 6.8 17.1 6.4 17 C6.9 18.6 8.4 19.8 10.2 19.8 C8.8 20.9 7 21.5 5.1 21.5 C4.8 21.5 4.5 21.5 4.2 21.5 C6 22.6 8.1 23.3 10.4 23.3 C17.6 23.3 21.6 17.3 21.6 12.1 V11.6 C22.4 11 23 10.2 23.5 9.3Z" fill="#fff"/></svg>
<div class="a" style="left:0;top:772px;width:1280px;height:28px;background:#d4d0c8"></div>
<div class="a" style="left:0;top:772px;width:1280px;height:1px;background:#e6e3dc"></div>
<div class="a" style="left:0;top:773px;width:1280px;height:1px;background:#fff"></div>
<div class="a" style="left:2px;top:776px;width:58px;height:22px;background:#d4d0c8;border-top:1px solid #fff;border-left:1px solid #fff;border-right:1px solid #404040;border-bottom:1px solid #404040;box-shadow:inset -1px -1px 0 #808080"></div>
<svg style="left:4px;top:779px" width="17" height="15"><path d="M2.5 2.2 C4.5 0.8 6.5 1 8.2 2 L7.2 7 C5.5 6 3.5 6 1.5 7.2Z" fill="#f25a22"/><path d="M9 2.3 C11 3.4 13 3.6 15.5 2.4 L14.5 7.5 C12 8.6 10 8.4 8 7.3Z" fill="#7cbb1e"/><path d="M1.3 8 C3.3 6.8 5.3 6.8 7 7.8 L6 12.8 C4.3 11.8 2.3 11.8 0.3 13Z" fill="#3aa0e8"/><path d="M7.8 8.2 C9.8 9.3 11.8 9.4 14.3 8.3 L13.3 13.3 C10.8 14.4 8.8 14.2 6.8 13.1Z" fill="#fcc31a"/></svg>
<div class="a" style="left:21px;top:780px;font-size:12px;font-weight:bold;color:#000;line-height:14px;letter-spacing:0.2px">Старт</div>
<svg style="left:77px;top:779px" width="17" height="17"><path d="M8.5 2.5 A6 6 0 1 0 14.3 10.5 H10.8 A2.8 2.8 0 0 1 5.8 9.5 H14.5 A6 6 0 0 0 8.5 2.5Z M5.9 7.5 A2.8 2.8 0 0 1 11.2 7.5Z" fill="#2a9be0" fill-rule="evenodd"/><path d="M2 14.5 C0 11 6 3 12 1 C15.5 0 16.5 2 14.5 5" fill="none" stroke="#f6c018" stroke-width="1.3"/></svg>
<svg style="left:111px;top:779px" width="16" height="16"><rect x="0.5" y="0.5" width="15" height="15" fill="#a8d0f0" stroke="#4a90d0" stroke-width="1"/><circle cx="8" cy="8" r="5.8" fill="#ff7a0a"/><path d="M6.2 4.8 L11 8 L6.2 11.2Z" fill="#fff"/></svg>
<svg style="left:145px;top:780px" width="17" height="16"><path d="M1 3 H6 L7 4.5 H15.5 V14.5 H1Z" fill="#f0d070" stroke="#c8a040" stroke-width="0.8"/><rect x="2.5" y="2" width="4" height="1.5" fill="#50d030"/><path d="M3.5 14.5 V9.5 Q3.5 8 5 8 H11.5 Q13 8 13 9.5 V14.5 H10.5 V11 H6 V14.5Z" fill="#40a0e0" stroke="#2080c0" stroke-width="0.6"/></svg>
<div class="a" style="left:171px;top:776px;width:32px;height:22px;background:#fff;border-top:2px solid #404040;border-left:2px solid #404040;border-right:1px solid #fff;border-bottom:1px solid #fff"></div>
<svg style="left:179px;top:780px" width="15" height="15"><circle cx="7.5" cy="7.5" r="7" fill="#db4437"/><path d="M7.5 7.5 L1.4 4 A7 7 0 0 0 7.5 14.5Z" fill="#0f9d58"/><path d="M7.5 7.5 L13.6 4 A7 7 0 0 1 7.5 14.5Z" fill="#ffcd40"/><path d="M7.5 7.5 L13.6 4 A7 7 0 0 0 1.4 4Z" fill="#db4437"/><circle cx="7.5" cy="7.5" r="3.4" fill="#fff"/><circle cx="7.5" cy="7.5" r="2.6" fill="#4285f4"/></svg>
<div class="a" style="left:948px;top:780px;font-size:12px;color:#000;line-height:14px;letter-spacing:-0.9px">BG</div>
<div class="a" style="left:968px;top:776px;width:1px;height:21px;background:#808080"></div><div class="a" style="left:969px;top:776px;width:1px;height:21px;background:#fff"></div>
<div class="a" style="left:972px;top:776px;width:307px;height:22px;border-top:1px solid #808080;border-left:1px solid #808080;border-bottom:1px solid #fff;border-right:1px solid #fff"></div>
<svg style="left:979px;top:779px" width="16" height="16"><defs><clipPath id="cc"><circle cx="8" cy="8" r="7.2"/></clipPath></defs><g clip-path="url(#cc)"><rect width="16" height="16" fill="#f4c060"/><path d="M0 9 Q8 5 16 11 V16 H0Z" fill="#7090c8"/><circle cx="11" cy="6.5" r="1.6" fill="#f09040"/></g><circle cx="8" cy="8" r="7.2" fill="none" stroke="#8a8a8a" stroke-width="0.6"/></svg>
<svg style="left:1003px;top:779px" width="17" height="17"><path d="M13 2 H6 Q3 2 3 4.5 Q3 7 6 7 H9 Q11 7 11 9 Q11 11 9 11 H1.5" fill="none" stroke="#1e4a88" stroke-width="3.2"/><path d="M13 2 H6 Q3 2 3 4.5 Q3 7 6 7 H9 Q11 7 11 9 Q11 11 9 11 H1.5" fill="none" stroke="#5aa0e0" stroke-width="1.4"/><circle cx="12" cy="12" r="4" fill="#fff" stroke="#000" stroke-width="1"/><path d="M12 9.5 V12 H14" fill="none" stroke="#000" stroke-width="0.9"/></svg>
<svg style="left:1027px;top:779px" width="17" height="16"><path d="M1 7 L7 3 V1 H12 L14 3 H10 V4 L15 7 V15 H1Z" fill="#10c020" stroke="#087a10" stroke-width="0.6"/><path d="M4.5 10.5 L7 13 L12 8" fill="none" stroke="#fff" stroke-width="2"/></svg>
<svg style="left:1051px;top:779px" width="16" height="16"><rect x="0.5" y="0.5" width="15" height="15" fill="#5a7060" stroke="#2a3a30" stroke-width="1"/><path d="M1 13 Q6 2 15 4 V15 H1Z" fill="#2a4a70" opacity="0.7"/><path d="M9.5 3 V11.5" stroke="#fff" stroke-width="1.2"/><ellipse cx="7.5" cy="12" rx="2.3" ry="1.6" fill="#fff"/><path d="M9.5 3 L12.5 4.5" stroke="#fff" stroke-width="1.4"/></svg>
<svg style="left:1075px;top:779px" width="16" height="16"><rect x="0.5" y="0.5" width="15" height="15" rx="1" fill="#1a2a30" stroke="#000" stroke-width="0.8"/><path d="M3 8 Q8 2 13 8 Q8 14 3 8Z" fill="none" stroke="#76b900" stroke-width="1.6"/><circle cx="8" cy="8" r="1.8" fill="#76b900"/></svg>
<svg style="left:1101px;top:778px" width="13" height="18"><ellipse cx="6.5" cy="9" rx="6" ry="8.5" fill="#0a3a8a"/><path d="M3.5 5.5 L9.5 11.5 L6.5 14.5 V3.5 L9.5 6.5 L3.5 12.5" fill="none" stroke="#fff" stroke-width="1.2"/></svg>
<svg style="left:1123px;top:779px" width="16" height="16"><rect x="1" y="2" width="8" height="13" fill="#aaa" stroke="#666" stroke-width="0.8"/><path d="M7 5 H13 V10 Q13 12 10 12 V15" fill="#fff" stroke="#555" stroke-width="1"/><path d="M9 1 V5 M12 1 V5" stroke="#555" stroke-width="1"/><path d="M2 9 L8 15 M8 9 L2 15" stroke="#f00010" stroke-width="1.8"/></svg>
<svg style="left:1146px;top:779px" width="17" height="16"><path d="M1 5.5 H4 L8.5 1.5 V14.5 L4 10.5 H1Z" fill="#fff" stroke="#555" stroke-width="1"/><path d="M10.5 5 Q12 8 10.5 11 M12.5 3.5 Q15 8 12.5 12.5" fill="none" stroke="#666" stroke-width="1.1"/></svg>
<svg style="left:1171px;top:779px" width="17" height="16"><path d="M2 1 V15.5" stroke="#444" stroke-width="1.8"/><path d="M3 1.5 H10 Q11 4 15 4 L12.5 8 H3Z" fill="#fff" stroke="#555" stroke-width="0.9"/></svg>
<svg style="left:1195px;top:779px" width="17" height="16"><path d="M1.5 15 V12.5 H4 V15 M4 15 V10 H7 V15 M7 15 V7.5 H10 V15 M10 15 V5 H13 V15 M13 15 V2.5 H15.5 V15 H1.5" fill="#fff" stroke="#555" stroke-width="0.9"/></svg>
<div class="a" style="left:1225px;top:780px;font-size:12px;color:#000;line-height:14px;letter-spacing:-0.4px">16:57</div>
<svg style="left:1260px;top:781px" width="17" height="15"><rect x="0.5" y="0.5" width="16" height="13" fill="#2a70c8" stroke="#1a4a9a" stroke-width="0.8"/><rect x="1.5" y="1.5" width="14" height="4" fill="#5aa0e8"/><rect x="4" y="10" width="12" height="2" fill="#1a2a4a"/><circle cx="2.5" cy="11.5" r="1.2" fill="#f0b020"/></svg>
</body></html>
